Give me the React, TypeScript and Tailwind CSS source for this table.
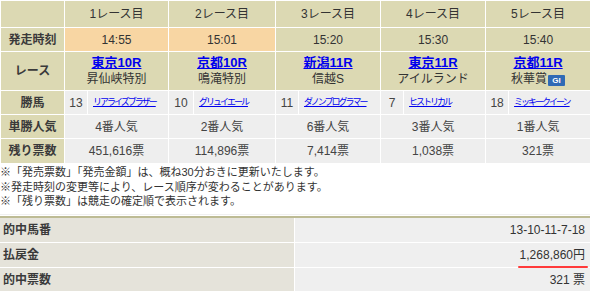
import React from 'react';

type Race = {
  title: string;
  time: string;
  past: boolean;
  venue: string;
  name: string;
  grade?: string;
  num: string;
  horse: string;
  pop: string;
  left: string;
};

const races: Race[] = [
  { title: '1レース目', time: '14:55', past: true, venue: '東京10R', name: '昇仙峡特別', num: '13', horse: 'リアライズブラザー', pop: '4番人気', left: '451,616票' },
  { title: '2レース目', time: '15:01', past: true, venue: '京都10R', name: '鳴滝特別', num: '10', horse: 'グリュイエール', pop: '2番人気', left: '114,896票' },
  { title: '3レース目', time: '15:20', past: false, venue: '新潟11R', name: '信越S', num: '11', horse: 'ダノンプログラマー', pop: '6番人気', left: '7,414票' },
  { title: '4レース目', time: '15:30', past: false, venue: '東京11R', name: 'アイルランド', num: '7', horse: 'ヒストリカル', pop: '3番人気', left: '1,038票' },
  { title: '5レース目', time: '15:40', past: false, venue: '京都11R', name: '秋華賞', grade: 'GI', num: '18', horse: 'ミッキークイーン', pop: '1番人気', left: '321票' },
];

const label = 'bg-[#dcd9b3] text-[12px] font-bold text-[#3a3a3a] text-center';

const App: React.FC = () => {
  return (
    <div className="w-[590px] h-[291px] overflow-hidden bg-white font-['Liberation_Sans','Noto_Sans_CJK_JP',sans-serif] text-[#333]">
      {/* race table */}
      <table className="w-[590px] table-fixed border-collapse">
        <colgroup>
          <col className="w-[64px]" />
          <col className="w-[23px]" />
          <col className="w-[81px]" />
          <col className="w-[25px]" />
          <col className="w-[82px]" />
          <col className="w-[23px]" />
          <col className="w-[82px]" />
          <col className="w-[23px]" />
          <col className="w-[82px]" />
          <col className="w-[23px]" />
          <col className="w-[82px]" />
        </colgroup>
        <tbody>
          <tr className="h-[27px]">
            <td className="bg-[#dcd9b3] border border-white" />
            {races.map((r) => (
              <td key={r.title} colSpan={2} className="bg-[#dcd9b3] border border-white text-center text-[12px] text-[#333]">
                {r.title}
              </td>
            ))}
          </tr>
          <tr className="h-[24px]">
            <td className={`${label} border border-white`}>発走時刻</td>
            {races.map((r) => (
              <td
                key={r.title}
                colSpan={2}
                className={`border border-white text-center text-[12px] text-[#333] ${r.past ? 'bg-[#f8d6a3]' : 'bg-[#dcd9b3]'}`}
              >
                {r.time}
              </td>
            ))}
          </tr>
          <tr className="h-[39px]">
            <td className={`${label} border border-white`}>レース</td>
            {races.map((r) => (
              <td key={r.title} colSpan={2} className="bg-[#dcd9b3] border border-white text-center leading-[16px]">
                <div className="text-[13px] font-bold text-[#0000ee] underline">{r.venue}</div>
                <div className="text-[12px] text-[#333] flex items-center justify-center">
                  {r.name}
                  {r.grade && (
                    <span className="ml-px mt-[3px] inline-flex items-center justify-center w-[17px] h-[11px] rounded-[1px] bg-[#2f6ab5] text-white text-[8px] font-bold leading-none">
                      {r.grade}
                    </span>
                  )}
                </div>
              </td>
            ))}
          </tr>
          <tr className="h-[24px]">
            <td className={`${label} border border-white`}>勝馬</td>
            {races.map((r) => (
              <React.Fragment key={r.title}>
                <td className="bg-[#eeeeee] border border-white text-center text-[12px] text-[#444]">{r.num}</td>
                <td className="bg-[#eeeeee] border border-white pl-[5px] text-[9px] tracking-[-2px] whitespace-nowrap overflow-hidden">
                  <span className="text-[#0000ee] underline">{r.horse}</span>
                </td>
              </React.Fragment>
            ))}
          </tr>
          <tr className="h-[24px]">
            <td className={`${label} border border-white`}>単勝人気</td>
            {races.map((r) => (
              <td key={r.title} colSpan={2} className="bg-[#eeeeee] border border-white text-center text-[12px] text-[#444]">
                {r.pop}
              </td>
            ))}
          </tr>
          <tr className="h-[25px]">
            <td className={`${label} border border-white`}>残り票数</td>
            {races.map((r) => (
              <td key={r.title} colSpan={2} className="bg-[#eeeeee] border border-white text-center text-[12px] text-[#444]">
                {r.left}
              </td>
            ))}
          </tr>
        </tbody>
      </table>

      {/* notes */}
      <div className="pt-[1px] text-[11px] leading-[14.5px] text-[#333]">
        <p>※「発売票数」「発売金額」は、概ね30分おきに更新いたします。</p>
        <p>※発走時刻の変更等により、レース順序が変わることがあります。</p>
        <p>※「残り票数」は競走の確定順で表示されます。</p>
      </div>

      {/* result */}
      <div className="mt-[5px] border-t border-[#f0f0f0]" />
      <div className="mt-[1px] border-t-2 border-[#bdbb94]">
        <div className="grid grid-cols-[294px_1fr] gap-x-px gap-y-px bg-white">
          <div className="h-[24px] bg-[#e5e3da] flex items-center pl-[3px] text-[12px] font-bold text-[#3a3a3a]">的中馬番</div>
          <div className="h-[24px] bg-[#efefef] flex items-center justify-end pr-[5px] text-[12px] text-[#333]">13-10-11-7-18</div>
          <div className="h-[24px] bg-[#e5e3da] flex items-center pl-[3px] text-[12px] font-bold text-[#3a3a3a]">払戻金</div>
          <div className="h-[24px] bg-[#efefef] flex items-center justify-end pr-[5px] text-[12px] text-[#333]">
            <span className="relative">
              1,268,860円
              <span className="absolute left-[-2px] right-[-3px] bottom-[-4px] h-[2px] rounded-full bg-[#ff3a3a]" />
            </span>
          </div>
          <div className="h-[24px] bg-[#e5e3da] flex items-center pl-[3px] text-[12px] font-bold text-[#3a3a3a]">的中票数</div>
          <div className="h-[24px] bg-[#efefef] flex items-center justify-end pr-[5px] text-[12px] text-[#333]">321 票</div>
        </div>
      </div>
    </div>
  );
};

export default App;
